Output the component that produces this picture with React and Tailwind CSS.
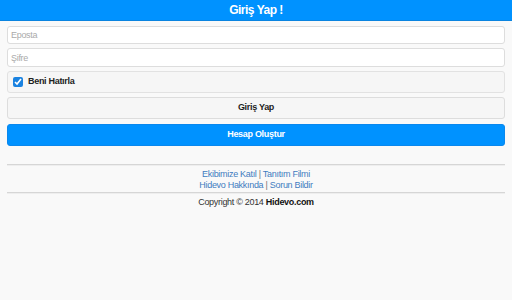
import React, { useState } from 'react';

const font = { fontFamily: '"Liberation Sans", Arial, sans-serif' };

const App = () => {
  const [remember, setRemember] = useState(true);

  return (
    <div className="min-h-[300px] w-[512px] bg-[#f9f9f9] text-[#333] tracking-[-0.3px]" style={font}>
      <div className="h-[21px] bg-[#0092ff] border-b border-[#0a84e0] flex items-center justify-center">
        <h1 className="text-[12px] font-bold text-white leading-none tracking-[-0.5px]">Giriş Yap !</h1>
      </div>

      <div className="px-[7px] pt-[5px] flex flex-col">
        <input
          type="text"
          placeholder="Eposta"
          className="h-[18px] w-full bg-white border border-[#ddd] rounded-[3px] px-[3px] text-[9px] placeholder-[#aaa] outline-none"
        />
        <input
          type="password"
          placeholder="Şifre"
          className="mt-[4px] h-[19px] w-full bg-white border border-[#ddd] rounded-[3px] px-[3px] text-[9px] placeholder-[#aaa] outline-none"
        />

        <label className="mt-[4px] h-[22px] w-full bg-[#f6f6f6] border border-[#e2e2e2] rounded-[3px] flex items-center px-[5px] gap-[5px]">
          <input
            type="checkbox"
            checked={remember}
            onChange={(e) => setRemember(e.target.checked)}
            className="w-[10px] h-[10px] accent-[#1a82e0]"
          />
          <span className="text-[9px] font-bold text-[#222]">Beni Hatırla</span>
        </label>

        <button className="mt-[4px] h-[22px] w-full bg-[#f6f6f6] border border-[#ddd] rounded-[3px] text-[9px] font-bold text-[#222]">
          Giriş Yap
        </button>
        <button className="mt-[5px] h-[22px] w-full bg-[#0092ff] border border-[#0a88ee] rounded-[3px] text-[9px] font-bold text-white">
          Hesap Oluştur
        </button>

        <div className="mt-[18px] h-[2px] w-full bg-[#d6d6d6] border-b border-[#eee]" />
        <div className="pt-[3px] pb-[1px] flex flex-col items-center text-[9px] leading-[11px] text-[#3f7cc0]">
          <div>
            <a href="#">Ekibimize Katıl</a> <span className="text-[#777]">|</span> <a href="#">Tanıtım Filmi</a>
          </div>
          <div>
            <a href="#">Hidevo Hakkında</a> <span className="text-[#777]">|</span> <a href="#">Sorun Bildir</a>
          </div>
        </div>
        <div className="h-[2px] w-full bg-[#d6d6d6] border-b border-[#eee]" />
        <div className="pt-[2px] text-center text-[9px] leading-[12px] text-[#333]">
          Copyright © 2014 <span className="font-bold text-[#111]">Hidevo.com</span>
        </div>
      </div>
    </div>
  );
};

export default App;
